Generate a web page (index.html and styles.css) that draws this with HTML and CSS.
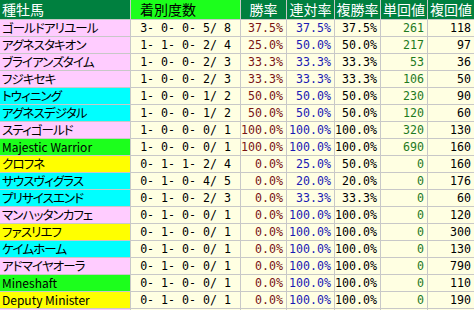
FILE: index.html
```html
<!DOCTYPE html>
<html lang="ja">
<head>
<meta charset="utf-8">
<title>種牡馬別成績</title>
<link rel="stylesheet" href="styles.css">
</head>
<body>
<div class="grid">
  <div class="h hname">種牡馬</div>
  <div class="h hrec">着別度数</div>
  <div class="h">勝率</div>
  <div class="h">連対率</div>
  <div class="h">複勝率</div>
  <div class="h">単回値</div>
  <div class="h">複回値</div>

  <div class="n kana pink">ゴールドアリユール</div><div class="c rec">3- 0- 0- 5/ 8</div><div class="c r win">37.5%</div><div class="c r ren">37.5%</div><div class="c r fk">37.5%</div><div class="c r tan">261</div><div class="c r fk">118</div>
  <div class="n kana pink">アグネスタキオン</div><div class="c rec">1- 1- 0- 2/ 4</div><div class="c r win">25.0%</div><div class="c r ren">50.0%</div><div class="c r fk">50.0%</div><div class="c r tan">217</div><div class="c r fk">97</div>
  <div class="n kana pink">ブライアンズタイム</div><div class="c rec">1- 0- 0- 2/ 3</div><div class="c r win">33.3%</div><div class="c r ren">33.3%</div><div class="c r fk">33.3%</div><div class="c r tan">53</div><div class="c r fk">36</div>
  <div class="n kana pink">フジキセキ</div><div class="c rec">1- 0- 0- 2/ 3</div><div class="c r win">33.3%</div><div class="c r ren">33.3%</div><div class="c r fk">33.3%</div><div class="c r tan">106</div><div class="c r fk">50</div>
  <div class="n kana cyan">トウィニング</div><div class="c rec">1- 0- 0- 1/ 2</div><div class="c r win">50.0%</div><div class="c r ren">50.0%</div><div class="c r fk">50.0%</div><div class="c r tan">230</div><div class="c r fk">90</div>
  <div class="n kana cyan">アグネスデジタル</div><div class="c rec">1- 0- 0- 1/ 2</div><div class="c r win">50.0%</div><div class="c r ren">50.0%</div><div class="c r fk">50.0%</div><div class="c r tan">120</div><div class="c r fk">60</div>
  <div class="n kana pink">スティゴールド</div><div class="c rec">1- 0- 0- 0/ 1</div><div class="c r win">100.0%</div><div class="c r ren">100.0%</div><div class="c r fk">100.0%</div><div class="c r tan">320</div><div class="c r fk">130</div>
  <div class="n latin green">Majestic Warrior</div><div class="c rec">1- 0- 0- 0/ 1</div><div class="c r win">100.0%</div><div class="c r ren">100.0%</div><div class="c r fk">100.0%</div><div class="c r tan">690</div><div class="c r fk">160</div>
  <div class="n kana yellow">クロフネ</div><div class="c rec">0- 1- 1- 2/ 4</div><div class="c r win">0.0%</div><div class="c r ren">25.0%</div><div class="c r fk">50.0%</div><div class="c r tan">0</div><div class="c r fk">160</div>
  <div class="n kana cyan">サウスヴィグラス</div><div class="c rec">0- 1- 0- 4/ 5</div><div class="c r win">0.0%</div><div class="c r ren">20.0%</div><div class="c r fk">20.0%</div><div class="c r tan">0</div><div class="c r fk">176</div>
  <div class="n kana cyan">プリサイスエンド</div><div class="c rec">0- 1- 0- 2/ 3</div><div class="c r win">0.0%</div><div class="c r ren">33.3%</div><div class="c r fk">33.3%</div><div class="c r tan">0</div><div class="c r fk">60</div>
  <div class="n kana pink">マンハッタンカフェ</div><div class="c rec">0- 1- 0- 0/ 1</div><div class="c r win">0.0%</div><div class="c r ren">100.0%</div><div class="c r fk">100.0%</div><div class="c r tan">0</div><div class="c r fk">120</div>
  <div class="n kana yellow">ファスリエフ</div><div class="c rec">0- 1- 0- 0/ 1</div><div class="c r win">0.0%</div><div class="c r ren">100.0%</div><div class="c r fk">100.0%</div><div class="c r tan">0</div><div class="c r fk">300</div>
  <div class="n kana cyan">ケイムホーム</div><div class="c rec">0- 1- 0- 0/ 1</div><div class="c r win">0.0%</div><div class="c r ren">100.0%</div><div class="c r fk">100.0%</div><div class="c r tan">0</div><div class="c r fk">130</div>
  <div class="n kana pink">アドマイヤオーラ</div><div class="c rec">0- 1- 0- 0/ 1</div><div class="c r win">0.0%</div><div class="c r ren">100.0%</div><div class="c r fk">100.0%</div><div class="c r tan">0</div><div class="c r fk">790</div>
  <div class="n latin green">Mineshaft</div><div class="c rec">0- 1- 0- 0/ 1</div><div class="c r win">0.0%</div><div class="c r ren">100.0%</div><div class="c r fk">100.0%</div><div class="c r tan">0</div><div class="c r fk">110</div>
  <div class="n latin yellow">Deputy Minister</div><div class="c rec">0- 1- 0- 0/ 1</div><div class="c r win">0.0%</div><div class="c r ren">100.0%</div><div class="c r fk">100.0%</div><div class="c r tan">0</div><div class="c r fk">190</div>
  <div class="n pink"></div><div class="c"></div><div class="c"></div><div class="c"></div><div class="c"></div><div class="c"></div><div class="c"></div>
</div>
</body>
</html>
```
FILE: styles.css
```css
html, body {
  margin: 0;
  padding: 0;
  overflow: hidden;
  background: #ffffff;
}
.grid {
  display: grid;
  grid-template-columns: 130px 109px 45px 47px 45px 46px 46px;
  grid-template-rows: 19px;
  grid-auto-rows: 16px;
  gap: 1px;
  background: #c8c8c8;
  width: 474px;
  font-family: "Noto Sans CJK JP", "DejaVu Sans", sans-serif;
  font-feature-settings: "palt";
}
.h {
  background: #00803f;
  color: #ffffff;
  font-size: 14px;
  line-height: 19px;
  text-align: center;
  white-space: nowrap;
}
.hname {
  text-align: left;
  padding-left: 2px;
}
.hrec {
  background: #1cff1c;
  color: #000000;
  text-align: left;
  padding-left: 9px;
}
.n {
  line-height: 16px;
  padding-left: 2px;
  color: #000000;
  white-space: nowrap;
}
.kana {
  font-size: 12.5px;
  letter-spacing: -0.9px;
}
.latin {
  font-size: 12px;
}
.pink { background: #ffccff; }
.cyan { background: #00ffff; }
.green { background: #1cff1c; }
.yellow { background: #ffff00; }
.c {
  background: #ffffe2;
  font-family: "DejaVu Sans Mono", "Liberation Mono", monospace;
  font-size: 11.6px;
  line-height: 16px;
  white-space: pre;
  color: #000000;
}
.rec { text-align: center; }
.r {
  text-align: right;
  padding-right: 3px;
}
.win { color: #7a1414; }
.ren { color: #1a1ab4; }
.tan { color: #1e7a1e; }
.fk { color: #000000; }
```
